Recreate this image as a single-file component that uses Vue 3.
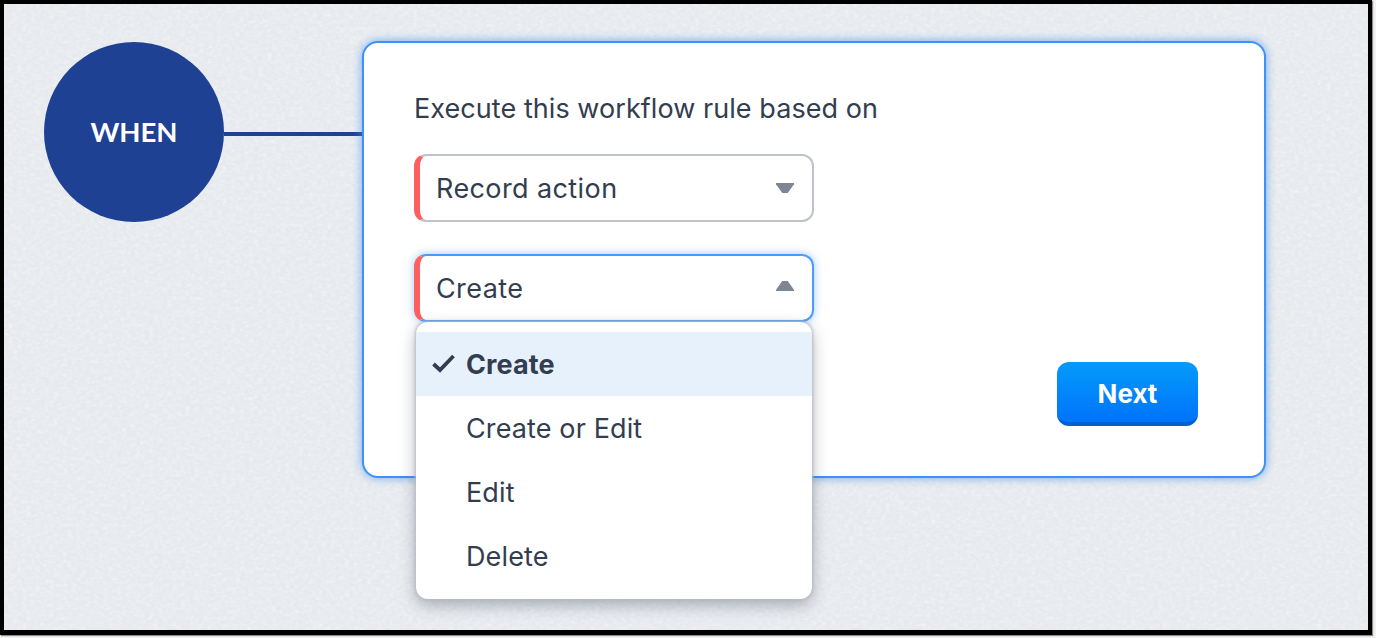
<script setup>
const options = [
  { label: 'Create', selected: true },
  { label: 'Create or Edit', selected: false },
  { label: 'Edit', selected: false },
  { label: 'Delete', selected: false }
]
</script>

<template>
  <div class="frame">
    <div class="canvas">
      <svg class="paper" width="1364" height="626" aria-hidden="true">
        <filter id="paper-noise" x="0" y="0" width="100%" height="100%">
          <feTurbulence type="fractalNoise" baseFrequency="0.22 0.3" numOctaves="2" seed="4" />
          <feColorMatrix type="matrix" values="0 0 0 0 1  0 0 0 0 1  0 0 0 0 1  0.5 0.5 0 0 -0.38" />
        </filter>
        <rect width="1364" height="626" filter="url(#paper-noise)" />
      </svg>
      <div class="when">WHEN</div>
      <div class="line"></div>
      <section class="card">
        <p class="title">Execute this workflow rule based on</p>
        <div class="select">
          <span>Record action</span>
          <i class="arrow down"></i>
        </div>
        <div class="select open">
          <span>Create</span>
          <i class="arrow up"></i>
          <ul class="menu">
            <li v-for="o in options" :key="o.label" :class="{ selected: o.selected }">
              <svg v-if="o.selected" class="check" viewBox="0 0 24 20" width="24" height="20">
                <path d="M1.5 10 L8 16 L21.5 2" fill="none" stroke="#333d50" stroke-width="3.8" />
              </svg>
              {{ o.label }}
            </li>
          </ul>
        </div>
        <button class="next">Next</button>
      </section>
    </div>
  </div>
</template>

<style>
html, body { margin: 0; background: #f2f2f2; overflow: hidden; }
</style>

<style scoped>
.frame {
  width: 1376px;
  height: 638px;
  background: #f2f2f2;
  overflow: hidden;
}
.canvas {
  position: relative;
  box-sizing: border-box;
  width: 1372px;
  height: 635px;
  border: solid #000;
  border-width: 4px 4px 5px 4px;
  box-shadow: 1px 1px 1px #8c8c8c;
  background-color: #e6e9ed;
  display: flex;
  align-items: flex-start;
  padding: 37px 0 0 40px;
  font-family: Inter, "Liberation Sans", sans-serif;
  color: #333d50;
}
.paper {
  position: absolute;
  left: 0;
  top: 0;
}
.when {
  position: relative;
  flex: none;
  box-sizing: border-box;
  width: 180px;
  height: 180px;
  margin-top: 1px;
  padding-bottom: 2px;
  border-radius: 50%;
  background: #1f4193;
  color: #fff;
  font: 700 27.5px Lato, sans-serif;
  display: flex;
  align-items: center;
  justify-content: center;
}
.line {
  position: relative;
  flex: none;
  width: 138px;
  height: 4px;
  margin-top: 91px;
  background: #1f4193;
}
.card {
  position: relative;
  flex: none;
  box-sizing: border-box;
  width: 904px;
  height: 437px;
  background: #fff;
  border: 2px solid #3f92f5;
  border-radius: 16px;
  box-shadow: 0 0 10px rgba(63,146,245,.75);
  padding: 49px 50px 0;
}
.title {
  margin: 0 0 28px;
  font-size: 27px;
  line-height: 34px;
  font-weight: 400;
  letter-spacing: .06px;
}
.select {
  position: relative;
  box-sizing: border-box;
  width: 400px;
  height: 68px;
  margin-bottom: 32px;
  border: 2px solid #bfc3c9;
  border-left: 6px solid #ff5f5f;
  border-radius: 12px;
  padding-left: 16px;
  display: flex;
  align-items: center;
  font-size: 27px;
  letter-spacing: .4px;
}
.select.open {
  border-color: #4b9bf8 #4b9bf8 #4b9bf8 #ff5f5f;
  box-shadow: 0 0 9px rgba(75,155,248,.55);
}
.arrow {
  position: absolute;
  right: 18px;
  width: 18px;
  height: 10px;
  background: #7f8594;
}
.arrow.down {
  top: 27px;
  clip-path: polygon(0 0, 100% 0, 100% 12%, 65% 100%, 35% 100%, 0 12%);
}
.arrow.up {
  top: 25px;
  clip-path: polygon(35% 0, 65% 0, 100% 88%, 100% 100%, 0 100%, 0 88%);
}
.menu {
  position: absolute;
  z-index: 2;
  left: -4px;
  top: 66px;
  width: 396px;
  height: 277px;
  box-sizing: border-box;
  margin: 0;
  padding: 10px 0 0;
  list-style: none;
  letter-spacing: .12px;
  background: #fff;
  border-radius: 12px;
  box-shadow: 0 0 3px 1px #b8bbc2, 0 6px 16px rgba(60,70,90,.4);
}
.menu li {
  height: 64px;
  padding-left: 50px;
  position: relative;
  display: flex;
  align-items: center;
  font-size: 27px;
}
.menu li.selected {
  background: #e7f1fc;
  font-weight: 700;
}
.check {
  position: absolute;
  left: 16px;
  top: 22px;
}
.next {
  display: block;
  width: 141px;
  height: 64px;
  margin: 40px 16px 0 auto;
  padding: 3px 0 0;
  border: 0;
  border-bottom: 4px solid #0060cc;
  border-radius: 12px;
  background: linear-gradient(#049bfa, #0073fb);
  color: #fff;
  font: 700 26px Inter, "Liberation Sans", sans-serif;
}
</style>
